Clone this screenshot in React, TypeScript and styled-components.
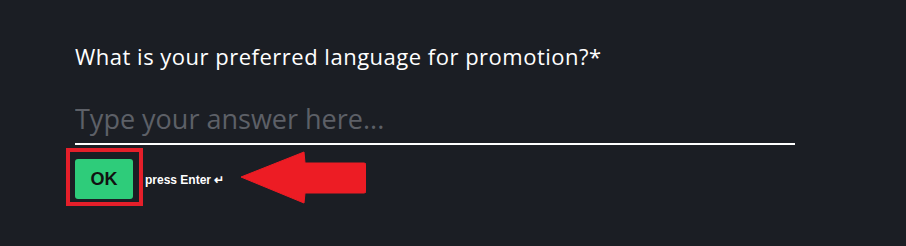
import styled, { createGlobalStyle } from "styled-components";

const Global = createGlobalStyle`
  html, body {
    margin: 0;
    background: #1b1e24;
  }
`

const Page = styled.div`
  width: 906px;
  height: 246px;
  box-sizing: border-box;
  padding: 40px 0 0 75px;
  background: #1b1e24;
  overflow: hidden;
`
const Question = styled.h2`
  margin: 0;
  font-family: "Open Sans", "Noto Sans", sans-serif;
  font-weight: 400;
  font-size: 22px;
  letter-spacing: 0.5px;
  line-height: 32px;
  color: #ffffff;
`
const Answer = styled.input`
  display: block;
  width: 720px;
  box-sizing: border-box;
  margin-top: 29px;
  padding: 0 0 6px;
  border: 0;
  border-bottom: 2px solid #ffffff;
  background: transparent;
  outline: none;
  font-family: "Open Sans", "Noto Sans", sans-serif;
  font-size: 27px;
  line-height: 36px;
  color: #ffffff;
  &::placeholder {
    color: #5d6067;
  }
`
const Actions = styled.div`
  display: flex;
  align-items: center;
  margin-top: 3px;
  margin-left: -9px;
`
const Highlight = styled.div`
  border: 4px solid #e51f2a;
  padding: 7px 6px 3px 5px;
`
const OkButton = styled.button`
  width: 58px;
  height: 40px;
  border: 0;
  border-radius: 3px;
  background: #2ecc7a;
  color: #111;
  font-family: "Liberation Sans", Arial, sans-serif;
  font-weight: 700;
  font-size: 18px;
  padding: 0;
`
const Hint = styled.span`
  margin-left: 2px;
  margin-top: 6px;
  font-family: "Liberation Sans", Arial, sans-serif;
  font-weight: 700;
  font-size: 12px;
  color: #ffffff;
`
const Arrow = styled.svg`
  margin-left: 16px;
`

const App = () => (
  <Page>
    <Global />
    <Question>What is your preferred language for promotion?*</Question>
    <Answer placeholder="Type your answer here..." />
    <Actions>
      <Highlight>
        <OkButton>OK</OkButton>
      </Highlight>
      <Hint>press Enter ↵</Hint>
      <Arrow width="126" height="53" viewBox="0 0 126 53">
        <path
          d="M1 26 L64 1 L65 12 L124 12 Q126 12 126 14 L126 40 Q126 42 124 42 L65 42 L64 52 Z"
          fill="#ed1c24"
          stroke="#ed1c24"
          strokeLinejoin="round"
          strokeWidth="1"
        />
      </Arrow>
    </Actions>
  </Page>
)

export default App;
